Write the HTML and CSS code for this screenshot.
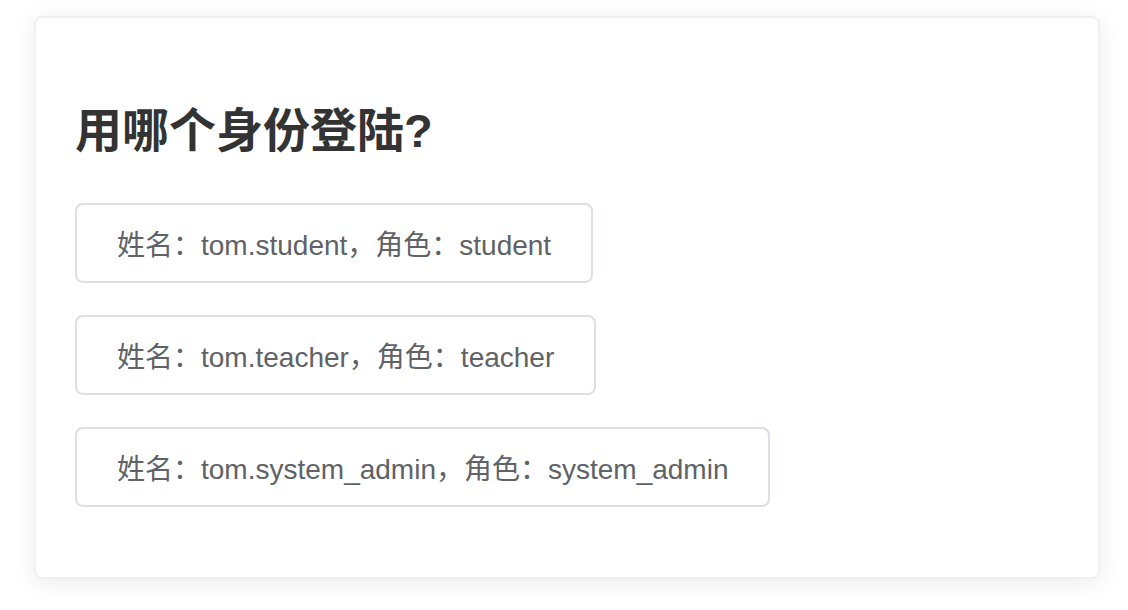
FILE: index.html
```html
<!DOCTYPE html>
<html lang="zh-CN">
<head>
<meta charset="utf-8">
<title>登陆</title>
<link rel="stylesheet" href="styles.css">
</head>
<body>
<div class="page">
  <div class="card">
    <h2 class="title">用哪个身份登陆?</h2>
    <div class="list">
      <button class="btn">姓名：tom.student，角色：student</button>
      <button class="btn">姓名：tom.teacher，角色：teacher</button>
      <button class="btn">姓名：tom.system_admin，角色：system_admin</button>
    </div>
  </div>
</div>
</body>
</html>
```
FILE: styles.css
```css
html, body {
  margin: 0;
  padding: 0;
  background: #ffffff;
}
.page {
  padding: 16px 28px 31px 34px;
}
.card {
  box-sizing: border-box;
  width: 1066px;
  height: 563px;
  background: #fff;
  border: 2px solid #eef0f4;
  border-radius: 8px;
  box-shadow: 0 4px 24px rgba(0, 0, 0, 0.08);
  padding: 84px 40px 40px 39px;
}
.title {
  margin: 0;
  font-family: "Liberation Sans", "Noto Sans CJK SC", sans-serif;
  font-size: 47px;
  line-height: 58px;
  font-weight: bold;
  color: #333333;
}
.list {
  margin-top: 43px;
  display: flex;
  flex-direction: column;
  align-items: flex-start;
  gap: 32px;
}
.btn {
  box-sizing: border-box;
  height: 80px;
  padding: 0 40px;
  background: #fff;
  border: 2px solid #dcdfe6;
  border-radius: 8px;
  font-family: "Liberation Sans", "Noto Sans CJK SC", sans-serif;
  font-size: 28px;
  color: #606266;
  cursor: pointer;
  white-space: nowrap;
}
```
